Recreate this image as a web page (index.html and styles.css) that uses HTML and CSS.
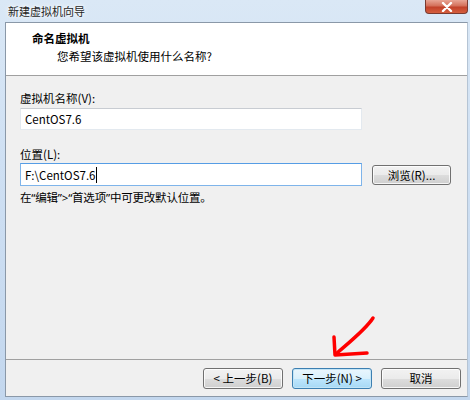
FILE: index.html
```html
<!DOCTYPE html>
<html lang="zh-CN">
<head>
<meta charset="utf-8">
<title>新建虚拟机向导</title>
<link rel="stylesheet" href="styles.css">
</head>
<body>
<div class="window">
  <div class="titlebar">
    <span class="title">新建虚拟机向导</span>
    <div class="close">
      <svg width="14" height="10" viewBox="0 0 14 10"><path d="M3 1 L11 9 M11 1 L3 9" stroke="#fff" stroke-width="2.4" stroke-linecap="round"/></svg>
    </div>
  </div>
  <div class="client">
    <div class="header">
      <div class="h-title">命名虚拟机</div>
      <div class="h-sub">您希望该虚拟机使用什么名称?</div>
    </div>
    <div class="content">
      <div class="label first">虚拟机名称(V):</div>
      <div class="field wide">CentOS7.6</div>
      <div class="label second">位置(L):</div>
      <div class="row">
        <div class="field wide focused">F:\CentOS7.6<span class="caret"></span></div>
        <button class="btn browse">浏览(R)...</button>
      </div>
      <div class="hint">在“编辑”&gt;“首选项”中可更改默认位置。</div>
    </div>
    <div class="footer">
      <button class="btn">&lt; 上一步(B)</button>
      <button class="btn default">下一步(N) &gt;</button>
      <button class="btn">取消</button>
    </div>
  </div>
  <svg class="arrow" width="470" height="400" viewBox="0 0 470 400">
    <path d="M373 318 C 366 329, 352 340, 337 353" fill="none" stroke="#ff0000" stroke-width="3.5" stroke-linecap="round"/>
    <path d="M334 337 L335 355 L367 353" fill="none" stroke="#ff0000" stroke-width="3.5" stroke-linecap="round" stroke-linejoin="round"/>
  </svg>
</div>
</body>
</html>
```
FILE: styles.css
```css
* { box-sizing: border-box; }
html, body { margin: 0; padding: 0; }
body {
  width: 470px;
  height: 400px;
  overflow: hidden;
  font-family: "Noto Sans CJK SC", "Noto Sans", sans-serif;
  font-size: 11.5px;
  color: #000;
}
.window {
  position: relative;
  width: 470px;
  height: 400px;
  display: flex;
  flex-direction: column;
  background: linear-gradient(to bottom, #dae8f6 0%, #cfe0f3 40%, #c3d7ee 100%);
  padding: 0 2px 3px 5px;
}
.titlebar {
  height: 22px;
  display: flex;
  align-items: flex-start;
  margin-left: -5px;
  margin-right: -2px;
}
.title {
  padding-left: 8px;
  line-height: 22px;
  font-size: 11px;
  color: #1e1e1e;
  text-shadow: 0 0 6px #fff, 0 0 3px #fff;
}
.close {
  margin-left: auto;
  margin-right: 2px;
  width: 43px;
  height: 14px;
  border: 1px solid #7a3a30;
  border-top: none;
  border-radius: 0 0 4px 4px;
  background: linear-gradient(to bottom, #e8a595 0%, #d4705a 45%, #c2412a 55%, #d55f3e 100%);
  display: flex;
  align-items: center;
  justify-content: center;
}
.client {
  flex: 1;
  display: flex;
  flex-direction: column;
  background: #f0f0f0;
  border: 1px solid #8e9aa8;
  border-color: #8a98a8 #b5c4d4 #8a98a8 #8a98a8;
}
.header {
  height: 53px;
  background: #fff;
  border-bottom: 1px solid #a0a0a0;
  padding: 7px 0 0 26px;
}
.h-title {
  font-weight: bold;
  line-height: 16px;
}
.h-sub {
  margin-top: 2px;
  padding-left: 25px;
  line-height: 16px;
}
.content {
  flex: 1;
  padding: 14px 0 0 14px;
  border-bottom: 1px solid #a0a0a0;
}
.label { line-height: 16px; }
.label.second { margin-top: 16px; }
.field {
  background: #fff;
  border: 1px solid #e3e9ef;
  border-top-color: #c8ccd2;
  height: 22px;
  line-height: 20px;
  padding-left: 4px;
  margin-top: 2px;
  display: flex;
  align-items: center;
}
.wide { width: 342px; }
.row {
  display: flex;
  align-items: center;
  gap: 10px;
  margin-top: 1px;
}
.row .field { margin-top: 0; height: 23px; }
.field.focused {
  border-color: #7eb4ea;
  border-top-color: #569de5;
}
.caret {
  display: inline-block;
  width: 1px;
  height: 16px;
  background: #000;
  margin-left: 1px;
}
.hint {
  margin-top: 4px;
  line-height: 16px;
  font-family: "Noto Sans", "Noto Sans CJK SC", sans-serif;
  letter-spacing: -0.2px;
}
.btn {
  font-family: inherit;
  font-size: 11.5px;
  color: #000;
  width: 80px;
  height: 21px;
  padding: 0;
  border: 1px solid #707070;
  border-radius: 3px;
  background: linear-gradient(to bottom, #f2f2f2 0%, #ebebeb 50%, #dddddd 51%, #cfcfcf 100%);
  box-shadow: inset 0 0 0 1px rgba(255,255,255,0.8);
  line-height: 19px;
}
.browse { width: 79px; height: 20px; }
.btn.default {
  border-color: #3c7fb1;
  background: linear-gradient(to bottom, #eaf6fd 0%, #d9f0fc 50%, #bee6fd 51%, #a7d9f5 100%);
  box-shadow: inset 0 0 0 1px #c4e5f6;
}
.footer {
  height: 36px;
  display: flex;
  justify-content: flex-end;
  align-items: flex-start;
  gap: 9px;
  padding: 8px 6px 0 0;
}
.arrow {
  position: absolute;
  left: 0;
  top: 0;
  pointer-events: none;
}
```
